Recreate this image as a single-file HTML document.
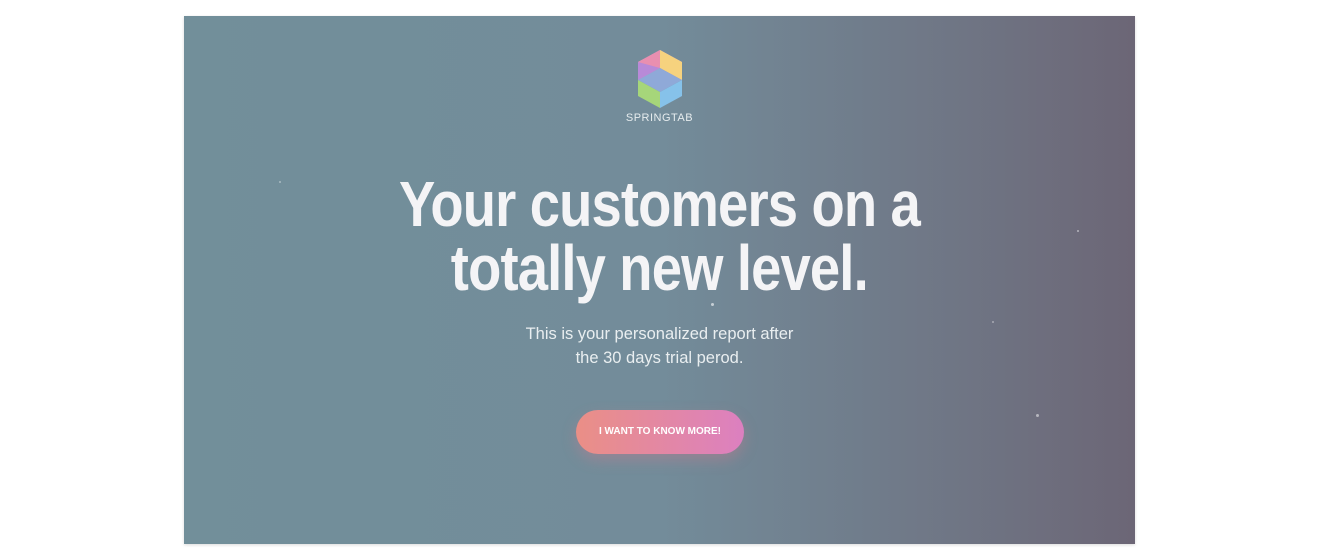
<!DOCTYPE html>
<html><head><style>
html,body{margin:0;padding:0;background:#fff;width:1318px;height:560px;overflow:hidden;font-family:"Liberation Sans",sans-serif}
.panel{position:absolute;left:184px;top:16px;width:951px;height:528px;background:linear-gradient(90deg,#728f9a 0%,#738c9a 50%,#6f7584 82%,#6c6676 100%);overflow:hidden;box-shadow:0 1px 3px rgba(0,0,0,.15)}
.h{position:absolute;left:0;width:951px;text-align:center;color:#f4f4f6;font-weight:bold;font-size:64px;line-height:64px;letter-spacing:-1px}
.h span{display:inline-block;transform:scaleX(0.85);white-space:nowrap}
.sub{position:absolute;left:0;width:951px;top:306px;text-align:center;color:#e9eef0;font-size:16.5px;line-height:24px}
.btn{position:absolute;left:392px;top:394px;width:168px;height:44px;border-radius:22px;background:linear-gradient(90deg,#ea8f86,#dc80c0);color:#fff;font-size:10px;font-weight:bold;letter-spacing:0;text-align:center;line-height:44px;box-shadow:0 6px 14px rgba(220,120,140,.35)}
.logo{position:absolute;left:454px;top:34px}
.brand{position:absolute;left:0;width:951px;top:96px;text-align:center;color:#e6ecee;font-size:11px;letter-spacing:.5px}
.star{position:absolute;background:#fff;border-radius:50%}
</style></head><body>
<div class="panel">
<svg class="logo" width="44" height="58" viewBox="0 0 44 58">
<polygon points="22,0 44,12 44,30 22,18 0,30 0,12" fill="#e99ad0"/>
<polygon points="22,0 44,12 44,30 22,18" fill="#f6d27e"/>
<polygon points="22,0 22,18 0,30 0,12" fill="#e98fb0"/>
<polygon points="0,12 22,18 0,30" fill="#b88ad8"/>
<polygon points="0,30 22,18 44,30 22,42" fill="#8fa9d8"/>
<polygon points="0,30 22,42 22,58 0,46" fill="#a6d67a"/>
<polygon points="22,42 44,30 44,46 22,58" fill="#86c2ea"/>
</svg>
<div class="brand">SPRINGTAB</div>
<div class="h" style="top:156px"><span>Your customers on a</span></div>
<div class="h" style="top:220px"><span>totally new level.</span></div>
<div class="sub">This is your personalized report after<br>the 30 days trial perod.</div>
<div class="btn">I WANT TO KNOW MORE!</div>
<div class="star" style="left:527px;top:287px;width:3px;height:3px;opacity:.6"></div>
<div class="star" style="left:852px;top:398px;width:3px;height:3px;opacity:.5"></div>
<div class="star" style="left:893px;top:214px;width:2px;height:2px;opacity:.5"></div>
<div class="star" style="left:95px;top:165px;width:2px;height:2px;opacity:.4"></div>
<div class="star" style="left:808px;top:305px;width:2px;height:2px;opacity:.4"></div>
</div>
</body></html>
